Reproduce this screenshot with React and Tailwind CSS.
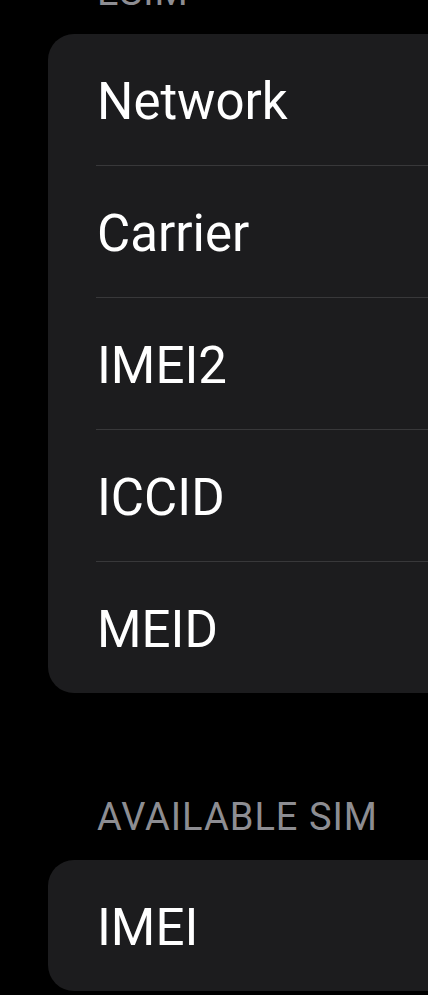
import React from "react";

const esimRows = ["Network", "Carrier", "IMEI2", "ICCID", "MEID"];
const simRows = ["IMEI"];

const SectionHeader = ({ title, className = "" }) => (
  <div
    className={`pl-[97px] h-[38px] text-[38px] leading-[38px] tracking-[1px] text-[#8d8d92] whitespace-nowrap ${className}`}
  >
    {title}
  </div>
);

const Group = ({ rows }) => (
  <div className="ml-[48px] w-[420px] bg-[#1c1c1e] rounded-[26px] overflow-hidden">
    {rows.map((label, index) => (
      <div key={label}>
        <div className="h-[131px] flex items-center pl-[49px] pt-[3px] text-[51px] leading-none text-white">
          {label}
        </div>
        {index < rows.length - 1 && (
          <div className="ml-[48px] h-px bg-[#38383a]" />
        )}
      </div>
    ))}
  </div>
);

export default function App() {
  return (
    <div
      className="w-full h-[995px] overflow-hidden bg-black"
      style={{ fontFamily: "Roboto, 'Liberation Sans', sans-serif" }}
    >
      <SectionHeader title="ESIM" className="mt-[-27px]" />
      <div className="mt-[23px]">
        <Group rows={esimRows} />
      </div>

      <SectionHeader title="AVAILABLE SIM" className="mt-[105px]" />
      <div className="mt-[24px]">
        <Group rows={simRows} />
      </div>
    </div>
  );
}
